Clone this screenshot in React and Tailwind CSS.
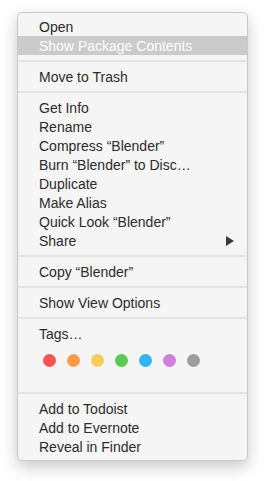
const groups = [
  [{ label: "Open" }, { label: "Show Package Contents", active: true }],
  [{ label: "Move to Trash" }],
  [
    { label: "Get Info" },
    { label: "Rename" },
    { label: "Compress “Blender”" },
    { label: "Burn “Blender” to Disc…" },
    { label: "Duplicate" },
    { label: "Make Alias" },
    { label: "Quick Look “Blender”" },
    { label: "Share", submenu: true },
  ],
  [{ label: "Copy “Blender”" }],
  [{ label: "Show View Options" }],
];

const tagColors = ["#fc5553", "#fd9c48", "#f8cc5b", "#5cc855", "#30b4f2", "#d27edc", "#9e9e9e"];

function Item({ label, active, submenu }) {
  return (
    <div
      className={`flex h-[19px] items-center justify-between pl-[21px] pr-[13px] text-[14px] leading-none ${
        active ? "bg-[#cbcbcb] text-white" : "text-[#2b2b2b]"
      }`}
    >
      <span>{label}</span>
      {submenu && (
        <svg width="8" height="10" viewBox="0 0 8 10">
          <path d="M0 0 L8 5 L0 10 Z" fill="#3a3a3a" />
        </svg>
      )}
    </div>
  );
}

function Separator() {
  return (
    <div className="flex h-[12px] items-center">
      <div className="h-[2px] w-full bg-[#e4e4e4]" />
    </div>
  );
}

export default function App() {
  return (
    <div
      className="min-h-screen bg-white pl-[17px] pt-[12px]"
      style={{ fontFamily: '"Liberation Sans", Arial, sans-serif' }}
    >
      <div className="w-[231px] rounded-[5px] border border-[#c8c8c8] bg-[#f5f5f5] py-[4px] shadow-[0_6px_16px_rgba(0,0,0,0.22)]">
        {groups.map((g, i) => (
          <div key={i}>
            {g.map((it) => (
              <Item key={it.label} {...it} />
            ))}
            <Separator />
          </div>
        ))}
        <Item label="Tags…" />
        <div className="flex h-[44px] gap-[11px] pl-[25px] pt-[11px]">
          {tagColors.map((c) => (
            <div key={c} className="h-[13px] w-[13px] rounded-full" style={{ backgroundColor: c }} />
          ))}
        </div>
        <Separator />
        <Item label="Add to Todoist" />
        <Item label="Add to Evernote" />
        <Item label="Reveal in Finder" />
      </div>
    </div>
  );
}
